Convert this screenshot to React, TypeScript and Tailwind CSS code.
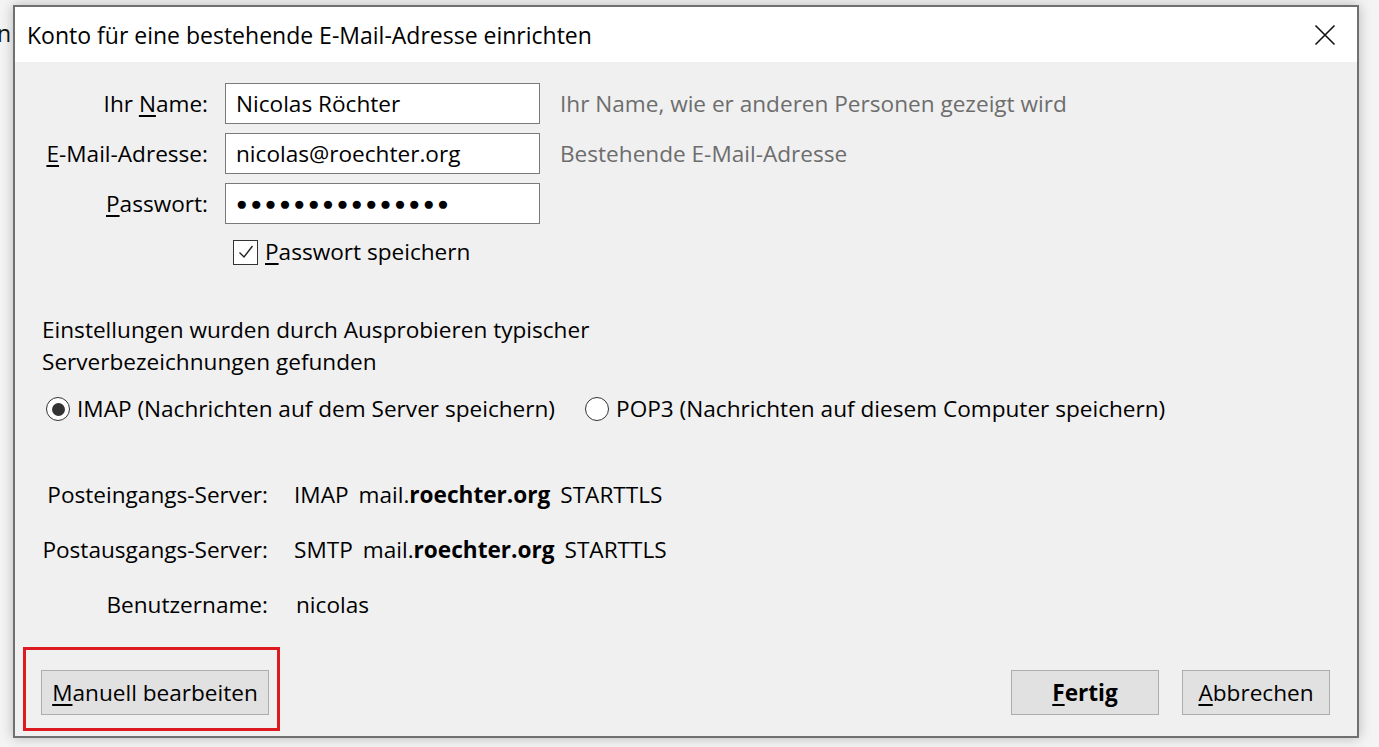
import React from 'react';

const FONT = { fontFamily: '"Open Sans", "Noto Sans", sans-serif' };

// label with an underlined access key
const Key: React.FC<{ text: string; k: number }> = ({ text, k }) => (
  <>
    {text.slice(0, k)}
    <span className="underline underline-offset-[3px] decoration-[1.5px]">{text[k]}</span>
    {text.slice(k + 1)}
  </>
);

const FIELDS = [
  { label: 'Ihr Name:', key: 4, value: 'Nicolas Röchter', hint: 'Ihr Name, wie er anderen Personen gezeigt wird' },
  { label: 'E-Mail-Adresse:', key: 0, value: 'nicolas@roechter.org', hint: 'Bestehende E-Mail-Adresse' },
  { label: 'Passwort:', key: 0, value: '●●●●●●●●●●●●●●●', hint: '' },
];

const SERVERS = [
  { label: 'Posteingangs-Server:', proto: 'IMAP', host: 'roechter.org', sec: 'STARTTLS' },
  { label: 'Postausgangs-Server:', proto: 'SMTP', host: 'roechter.org', sec: 'STARTTLS' },
];

const Radio: React.FC<{ checked?: boolean; label: string }> = ({ checked, label }) => (
  <div className="flex items-center gap-[7px]">
    <span className="w-[24px] h-[24px] rounded-full border-[1.5px] border-[#333] bg-white flex items-center justify-center">
      {checked && <span className="w-[13px] h-[13px] rounded-full bg-[#333]" />}
    </span>
    <span>{label}</span>
  </div>
);

export default function App() {
  return (
    <div
      className="relative w-[1379px] h-[747px] bg-[#f4f4f4] overflow-hidden text-black text-[22.6px] pl-[13px] pt-[5px]"
      style={FONT}
    >
      <span className="absolute left-[-3px] top-[22px] text-[23px] leading-none text-[#111]">n</span>

      <div className="w-[1346px] h-[733px] border-2 border-[#707070] bg-[#f0f0f0] shadow-[0_0_12px_rgba(0,0,0,0.25)] flex flex-col">
        {/* title bar */}
        <div className="h-[55px] bg-white flex items-center justify-between pl-[12px] pr-[20px] shrink-0">
          <span className="text-[23px] pt-[2px]">Konto für eine bestehende E-Mail-Adresse einrichten</span>
          <svg width="22" height="22" viewBox="0 0 22 22" className="mr-[1px]">
            <path d="M1.5 1.5 L20.5 20.5 M20.5 1.5 L1.5 20.5" stroke="#111" strokeWidth="1.6" fill="none" />
          </svg>
        </div>

        {/* body */}
        <div className="flex-1 flex flex-col">
          <div className="mt-[21px] grid grid-cols-[193px_315px_auto] gap-y-[9px] items-center">
            {FIELDS.map(f => (
              <React.Fragment key={f.label}>
                <div className="text-right">
                  <Key text={f.label} k={f.key} />
                </div>
                <div className="ml-[17px] w-[315px] h-[41px] bg-white border border-[#7a7a7a] flex items-center px-[10px] overflow-hidden whitespace-nowrap">
                  {f.value.startsWith('●') ? (
                    <span className="text-[19px] tracking-[2.9px]">{f.value}</span>
                  ) : (
                    f.value
                  )}
                </div>
                <div className="ml-[37px] text-[#6d6d6d]">{f.hint}</div>
              </React.Fragment>
            ))}
          </div>

          <div className="mt-[16px] ml-[218px] flex items-center gap-[7px] h-[24px]">
            <span className="w-[25px] h-[25px] border-[1.5px] border-[#333] bg-white flex items-center justify-center">
              <svg width="18" height="18" viewBox="0 0 18 18">
                <path d="M2.5 9.5 L7 14 L15.5 3" stroke="#222" strokeWidth="1.4" fill="none" />
              </svg>
            </span>
            <span>
              <Key text="Passwort speichern" k={0} />
            </span>
          </div>

          <div className="mt-[50px] ml-[27px] leading-[32px]">
            Einstellungen wurden durch Ausprobieren typischer
            <br />
            Serverbezeichnungen gefunden
          </div>

          <div className="mt-[15px] ml-[31px] h-[32px] flex items-center gap-[30px]">
            <Radio checked label="IMAP (Nachrichten auf dem Server speichern)" />
            <Radio label="POP3 (Nachrichten auf diesem Computer speichern)" />
          </div>

          <div className="mt-[54px] grid grid-cols-[253px_auto] gap-y-[23px] leading-[32px]">
            {SERVERS.map(s => (
              <React.Fragment key={s.label}>
                <div className="text-right">{s.label}</div>
                <div className="ml-[26px] flex gap-[10px]">
                  <span>{s.proto}</span>
                  <span>
                    mail.<b className="font-bold">{s.host}</b>
                  </span>
                  <span>{s.sec}</span>
                </div>
              </React.Fragment>
            ))}
            <div className="text-right">Benutzername:</div>
            <div className="ml-[28px]">nicolas</div>
          </div>

          <div className="mt-[49px] flex items-center pl-[26px] pr-[27px]">
            <div className="relative">
              <button className="w-[228px] h-[45px] bg-[#e1e1e1] border border-[#adadad] flex items-center justify-center">
                <Key text="Manuell bearbeiten" k={0} />
              </button>
              <div className="absolute left-[-18px] top-[-23px] right-[-11px] bottom-[-16px] border-[3px] border-[#dc1a1f]" />
            </div>
            <div className="flex-1" />
            <button className="w-[148px] h-[45px] bg-[#e1e1e1] border border-[#adadad] font-bold flex items-center justify-center">
              <Key text="Fertig" k={0} />
            </button>
            <button className="ml-[23px] w-[148px] h-[45px] bg-[#e1e1e1] border border-[#adadad] flex items-center justify-center">
              <Key text="Abbrechen" k={0} />
            </button>
          </div>
        </div>
      </div>
    </div>
  );
}
